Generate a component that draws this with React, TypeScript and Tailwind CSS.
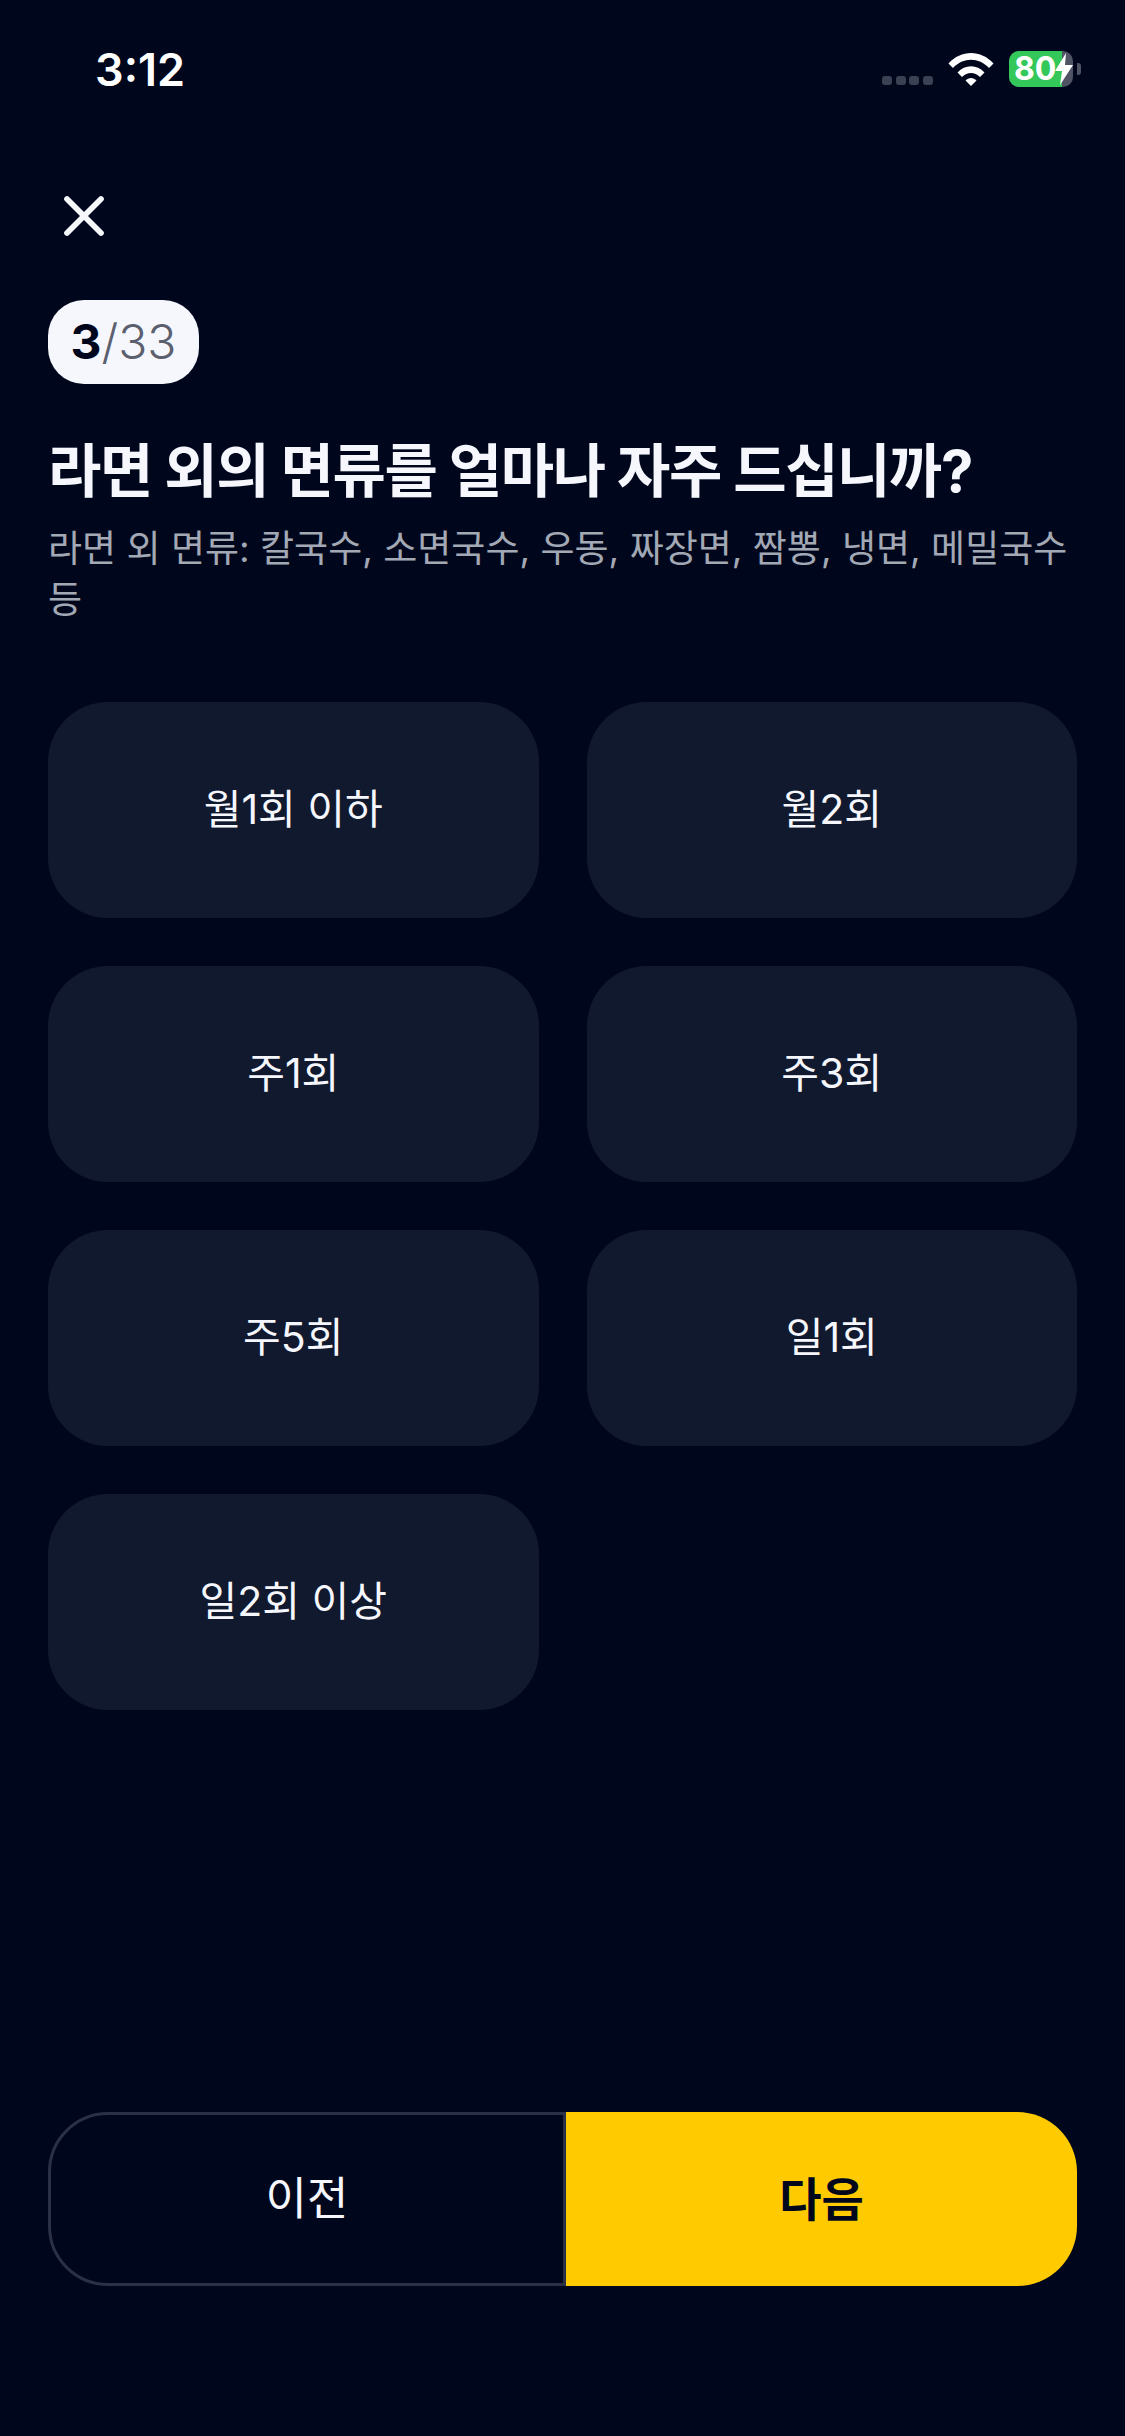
import { X } from "lucide-react";

const FONT = "font-['Inter','Noto_Sans_CJK_KR',sans-serif]";

const options = ["월1회 이하", "월2회", "주1회", "주3회", "주5회", "일1회", "일2회 이상"];

const StatusBar = () => {
  return (
    <div className="h-[138px] pl-[95px] pr-[44px] pt-[43px] flex justify-between items-start">
      <span className="text-[45px] leading-[54px] font-semibold text-white">3:12</span>
      <div className="flex items-start mt-[8px]">
        {/* signal dots */}
        <div className="flex gap-[3.6px] mt-[25px] mr-[15px]">
          {[0, 1, 2, 3].map((i) => (
            <div key={i} className="w-[10px] h-[9px] rounded-[3px] bg-[#3a4152]" />
          ))}
        </div>
        {/* wifi */}
        <svg width="46" height="34" viewBox="0 0 46 34" className="mr-[15px] mt-[1px]">
          <path d="M0.5 11.5C13 -2.5 33 -2.5 45.5 11.5L41 16C31 5 15 5 5 16Z" fill="#fff" />
          <path d="M9.5 20.5C17 12 29 12 36.5 20.5L32 25C26.5 19.5 19.5 19.5 14 25Z" fill="#fff" />
          <path d="M17.5 28.5C20.5 25 25.5 25 28.5 28.5L23 34Z" fill="#fff" />
        </svg>
        {/* battery */}
        <div className="relative w-[64px] h-[36px] rounded-[10px] bg-[#4f5364] flex">
          <div className="w-[53px] h-full rounded-l-[10px] bg-[#34c759]" />
          <span className="absolute left-[5px] top-0 text-[32px] leading-[36px] font-bold text-white">80</span>
          <svg width="18" height="32" viewBox="0 0 18 32" className="absolute left-[46px] top-[2px]">
            <path d="M11 0L0 18H7L5 32L18 12H10Z" fill="#fff" />
          </svg>
        </div>
        <div className="w-[4px] h-[12px] ml-[4px] mt-[12px] rounded-r-[3px] bg-[#4f5364]" />
      </div>
    </div>
  );
};

const App = () => {
  return (
    <div className={`w-[1125px] h-[2436px] bg-[#00071c] flex flex-col ${FONT}`}>
      <StatusBar />

      <div className="flex-1 flex flex-col px-[48px]">
        {/* close */}
        <X size={68} strokeWidth={2} color="#f5f7fb" className="mt-[44px] ml-[2px]" />

        {/* progress badge */}
        <div className="mt-[50px] w-[151px] h-[84px] rounded-[36px] bg-[#f5f7fd] flex items-center justify-center text-[48px]">
          <span className="font-bold text-[#00071c]">3</span>
          <span className="font-light text-[#5b5f6e]">/33</span>
        </div>

        {/* title */}
        <h1 className="mt-[47px] text-[58px] leading-[80px] font-bold tracking-[-1.4px] text-[#f5f7fd] whitespace-nowrap">
          라면 외의 면류를 얼마나 자주 드십니까?
        </h1>
        <p className="mt-[12px] text-[37px] leading-[51px] text-[#a3a8b5]">
          라면 외 면류: 칼국수, 소면국수, 우동, 짜장면, 짬뽕, 냉면, 메밀국수 등
        </p>

        {/* options */}
        <div className="mt-[77px] grid grid-cols-2 gap-[48px]">
          {options.map((label) => (
            <div
              key={label}
              className="h-[216px] rounded-[60px] bg-[#11192f] flex items-center justify-center text-[41px] text-[#f5f7fd]"
            >
              {label}
            </div>
          ))}
        </div>

        {/* bottom buttons */}
        <div className="mt-auto mb-[150px] flex h-[174px]">
          <div className="w-[518px] rounded-l-[60px] border-[3px] border-[#2a3145] flex items-center justify-center text-[45px] text-[#f5f7fd]">
            이전
          </div>
          <div className="flex-1 rounded-r-[60px] bg-[#ffcb00] flex items-center justify-center text-[46px] font-bold text-[#00071c]">
            다음
          </div>
        </div>
      </div>
    </div>
  );
};

export default App;
